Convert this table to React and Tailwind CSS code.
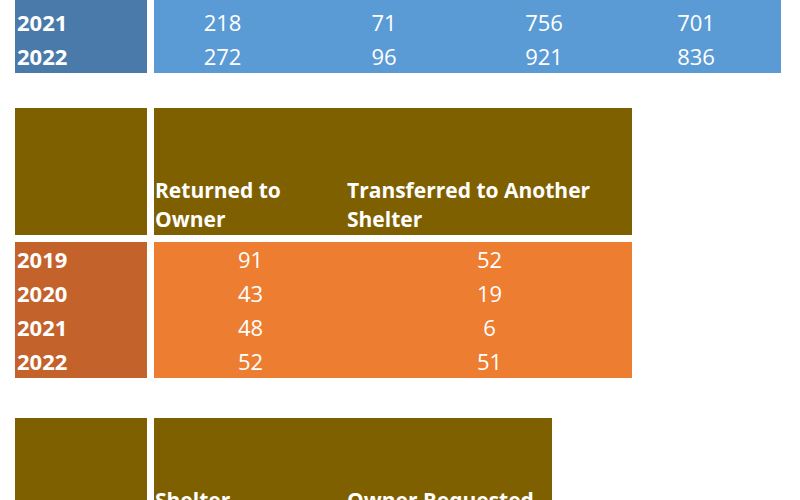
export default function App() {
  const blueRows = [
    ["2021", "218", "71", "756", "701"],
    ["2022", "272", "96", "921", "836"],
  ];
  const orangeRows = [
    ["2019", "91", "52"],
    ["2020", "43", "19"],
    ["2021", "48", "6"],
    ["2022", "52", "51"],
  ];

  return (
    <div
      className="h-[500px] w-[800px] overflow-hidden bg-white pl-[15px] text-white"
      style={{ fontFamily: "'Open Sans', Lato, sans-serif" }}
    >
      {/* blue table (scrolled, only last rows visible) */}
      <div className="flex gap-[7px]">
        <div className="w-[132px] bg-[#4a7aaa] pt-[5px] text-[22px] font-bold">
          {blueRows.map((r) => (
            <div key={r[0]} className="h-[34px] pl-[2px] leading-[34px]">
              {r[0]}
            </div>
          ))}
        </div>
        <div className="w-[627px] bg-[#5b9bd5] pt-[5px] text-[22px]">
          {blueRows.map((r) => (
            <div key={r[0]} className="flex h-[34px] leading-[34px]">
              <div className="w-[137px] text-center">{r[1]}</div>
              <div className="w-[186px] text-center">{r[2]}</div>
              <div className="w-[134px] text-center">{r[3]}</div>
              <div className="w-[170px] text-center">{r[4]}</div>
            </div>
          ))}
        </div>
      </div>

      {/* orange table */}
      <div className="mt-[35px] flex gap-[7px]">
        <div className="h-[127px] w-[132px] bg-[#7f6000]" />
        <div className="flex h-[127px] w-[478px] items-end bg-[#7f6000] pb-[1px] text-[21px] font-bold leading-[29px]">
          <div className="w-[193px] pl-[1px]">
            Returned to
            <br />
            Owner
          </div>
          <div className="w-[285px]">
            Transferred to Another
            <br />
            Shelter
          </div>
        </div>
      </div>
      <div className="mt-[7px] flex gap-[7px] text-[22px]">
        <div className="w-[132px] bg-[#c3622b] font-bold">
          {orangeRows.map((r) => (
            <div key={r[0]} className="h-[34px] pl-[2px] leading-[34px]">
              {r[0]}
            </div>
          ))}
        </div>
        <div className="w-[478px] bg-[#ed7d31]">
          {orangeRows.map((r) => (
            <div key={r[0]} className="flex h-[34px] leading-[34px]">
              <div className="w-[193px] text-center">{r[1]}</div>
              <div className="w-[285px] text-center">{r[2]}</div>
            </div>
          ))}
        </div>
      </div>

      {/* third table header, cut by the window edge */}
      <div className="mt-[40px] flex gap-[7px]">
        <div className="h-[127px] w-[132px] bg-[#7f6000]" />
        <div className="flex h-[127px] w-[398px] items-end bg-[#7f6000] pb-[1px] text-[21px] font-bold leading-[29px]">
          <div className="w-[193px] pl-[1px]">
            Shelter
            <br />
            Overflow
          </div>
          <div className="w-[205px]">
            Owner Requested
            <br />
            Euthanasia
          </div>
        </div>
      </div>
    </div>
  );
}
